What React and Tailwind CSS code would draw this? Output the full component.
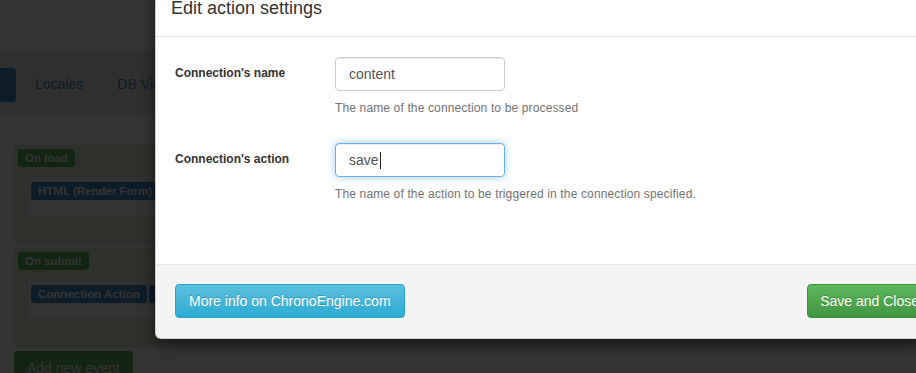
import React from 'react';

const Label = ({ color, children }) => (
  <span className={`block whitespace-nowrap px-[7px] text-[11.5px] font-bold leading-[18px] text-white rounded-[3px] ${color}`}>
    {children}
  </span>
);

const EventPanel = ({ title, children }) => (
  <div className="flex h-[99px] w-[900px] flex-col items-start rounded-[4px] border border-[#d6e9c6] bg-[#dff0d8] pl-[3px] pt-[3px]">
    <Label color="bg-[#5cb85c]">{title}</Label>
    <div className="mt-[9px] ml-[9px] h-[40px] w-[860px] border border-[#e3e3e3] bg-white">
      <div className="flex gap-[2px] pl-[3px] pt-[5px] pb-[5px] bg-[#f5f5f5]">{children}</div>
    </div>
  </div>
);

const Field = ({ label, value, help, focused }) => (
  <div className="flex">
    <div className="w-[160px] pt-[8px] text-[12px] font-bold leading-[17px] text-[#333]">{label}</div>
    <div>
      <div
        className={`flex h-[34px] w-[170px] items-center rounded-[4px] border px-[13px] text-[14px] text-[#555] ${
          focused
            ? 'border-[#66afe9] shadow-[inset_0_1px_1px_rgba(0,0,0,0.075),0_0_8px_rgba(102,175,233,0.6)]'
            : 'border-[#ccc] shadow-[inset_0_1px_1px_rgba(0,0,0,0.075)]'
        }`}
      >
        {value}
        {focused && <span className="ml-px inline-block h-[17px] w-px bg-[#222]" />}
      </div>
      <div className="mt-[9px] whitespace-nowrap text-[12px] leading-[17px] tracking-[0.14px] text-[#737373]">{help}</div>
    </div>
  </div>
);

export default function App() {
  return (
    <div className="relative h-[373px] w-[916px] overflow-hidden bg-white font-['Liberation_Sans',Arial,sans-serif]">
      {/* page behind the modal */}
      <div className="h-[53px]" />
      <div className="flex h-[62px] items-center border-t border-[#dcdcdc] bg-[#ececec] text-[14px] text-[#428bca]">
        <div className="h-[34px] w-[16px] rounded-r-[4px] bg-[#428bca]" />
        <span className="ml-[19px]">Locales</span>
        <span className="ml-[34px]">DB View</span>
      </div>
      <div className="flex flex-col items-start gap-[4px] px-[14px] pt-[30px]">
        <EventPanel title="On load">
          <Label color="bg-[#428bca]">HTML (Render Form)</Label>
        </EventPanel>
        <EventPanel title="On submit">
          <Label color="bg-[#428bca]">Connection Action</Label>
          <Label color="bg-[#428bca]">Event Switcher</Label>
        </EventPanel>
        <div className="whitespace-nowrap rounded-[4px] bg-[#5cb85c] px-[13px] py-[6px] text-[14px] leading-[22px] text-white">
          Add new event
        </div>
      </div>

      {/* backdrop */}
      <div className="absolute inset-0 bg-black/80" />

      {/* modal */}
      <div className="absolute left-[155px] top-[-21px] w-[797px] rounded-[6px] border border-black/20 bg-white shadow-[0_5px_15px_rgba(0,0,0,0.5)]">
        <div className="border-b border-[#e5e5e5] px-[15px] py-[15px]">
          <h4 className="text-[18px] leading-[26px] text-[#333]">Edit action settings</h4>
        </div>
        <div className="h-[227px] px-[19px] pt-[20px]">
          <div className="flex flex-col gap-[26px]">
            <Field label="Connection's name" value="content" help="The name of the connection to be processed" />
            <Field
              label="Connection's action"
              value="save"
              focused
              help="The name of the action to be triggered in the connection specified."
            />
          </div>
        </div>
        <div className="flex h-[74px] items-start justify-between rounded-b-[6px] border-t border-[#e5e5e5] bg-[#f4f4f4] px-[19px] pt-[19px]">
          <button className="h-[34px] rounded-[4px] border border-[#28a4c9] bg-gradient-to-b from-[#5bc0de] to-[#2aabd2] px-[13px] text-[14px] text-white [text-shadow:0_-1px_0_rgba(0,0,0,0.2)]">
            More info on ChronoEngine.com
          </button>
          <button className="h-[34px] rounded-[4px] border border-[#3e8f3e] bg-gradient-to-b from-[#5cb85c] to-[#419641] px-[12px] text-[14px] text-white [text-shadow:0_-1px_0_rgba(0,0,0,0.2)]">
            Save and Close
          </button>
        </div>
      </div>
    </div>
  );
}
